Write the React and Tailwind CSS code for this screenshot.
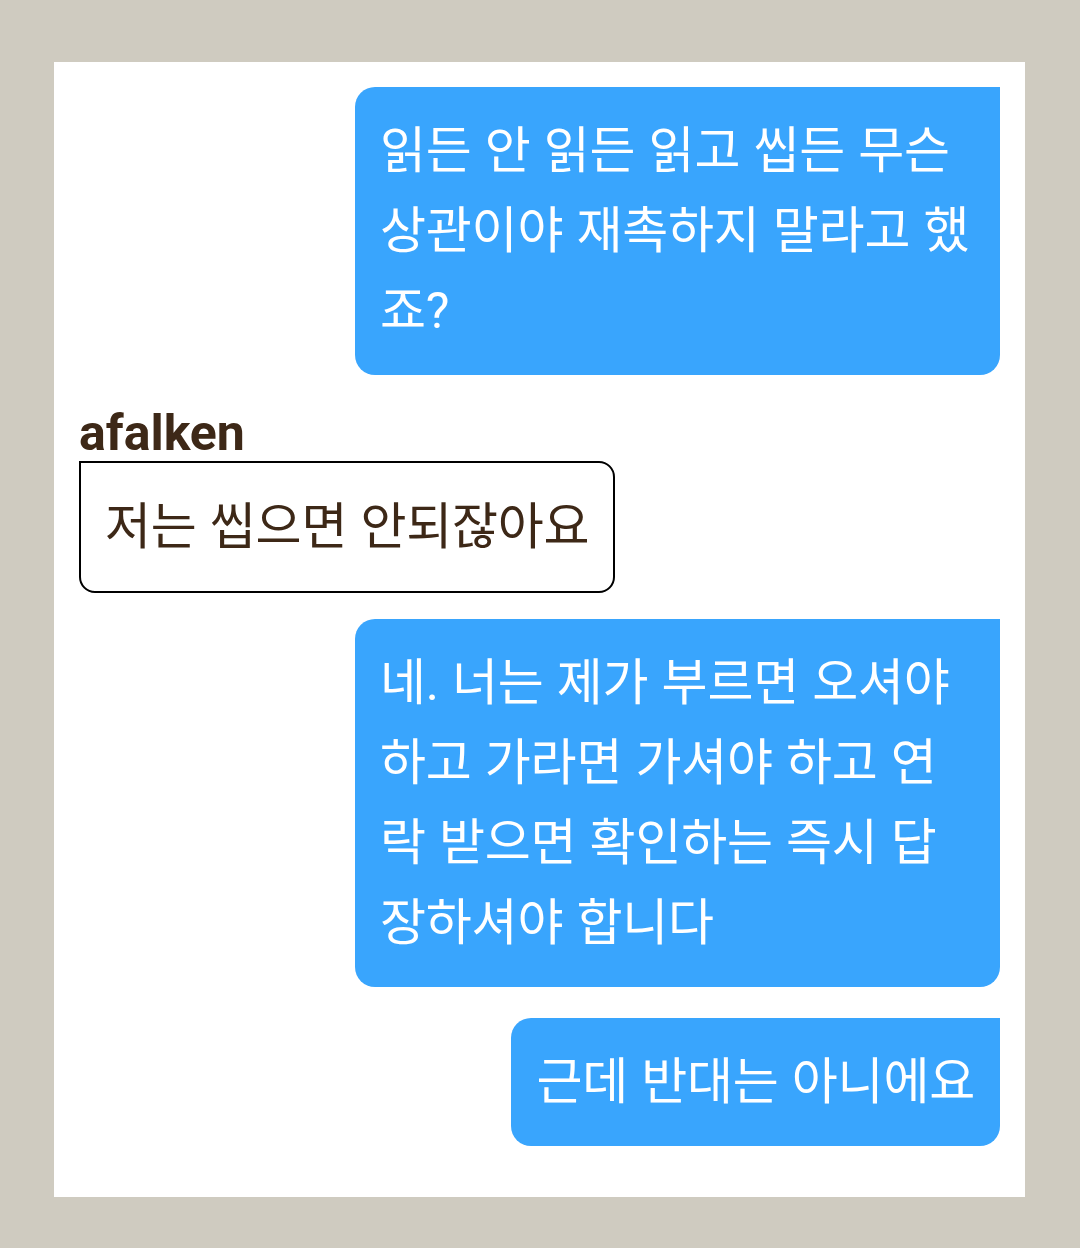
const FONT = { fontFamily: "Roboto, 'Noto Sans CJK KR', sans-serif" };

function Sent({ lines, fixed, className = "" }) {
  return (
    <div className={`flex justify-end ${className}`}>
      <div
        className={`rounded-[20px] rounded-tr-none bg-[#39a5fd] px-[25px] py-6 text-[50px] leading-[80px] tracking-[-0.2px] [word-spacing:1px] text-white ${
          fixed ? "w-[645px]" : ""
        }`}
      >
        {lines.map((l, i) => (
          <div key={i} className="whitespace-nowrap">
            {l}
          </div>
        ))}
      </div>
    </div>
  );
}

function Received({ name, text, className = "" }) {
  return (
    <div className={`flex flex-col items-start ${className}`}>
      <p className="text-[50px] font-bold leading-[56px] text-[#3d2817]">{name}</p>
      <div className="rounded-[16px] rounded-tl-none border-2 border-black bg-white px-[24px] py-6 text-[50px] leading-[80px] tracking-[-0.2px] [word-spacing:1px] text-[#3d2817] whitespace-nowrap">
        {text}
      </div>
    </div>
  );
}

export default function App() {
  return (
    <div className="min-h-screen bg-[#cfcbc0] pl-[54px] pr-[55px] pt-[62px] pb-[51px]" style={FONT}>
      <div className="bg-white px-[25px] pt-[25px] pb-[51px]">
        <Sent
          fixed
          lines={["읽든 안 읽든 읽고 씹든 무슨", "상관이야 재촉하지 말라고 했", "죠?"]}
        />
        <Received className="mt-[30px]" name="afalken" text="저는 씹으면 안되잖아요" />
        <Sent
          fixed
          className="mt-[26px]"
          lines={[
            "네. 너는 제가 부르면 오셔야",
            "하고 가라면 가셔야 하고 연",
            "락 받으면 확인하는 즉시 답",
            "장하셔야 합니다",
          ]}
        />
        <Sent className="mt-[31px]" lines={["근데 반대는 아니에요"]} />
      </div>
    </div>
  );
}
